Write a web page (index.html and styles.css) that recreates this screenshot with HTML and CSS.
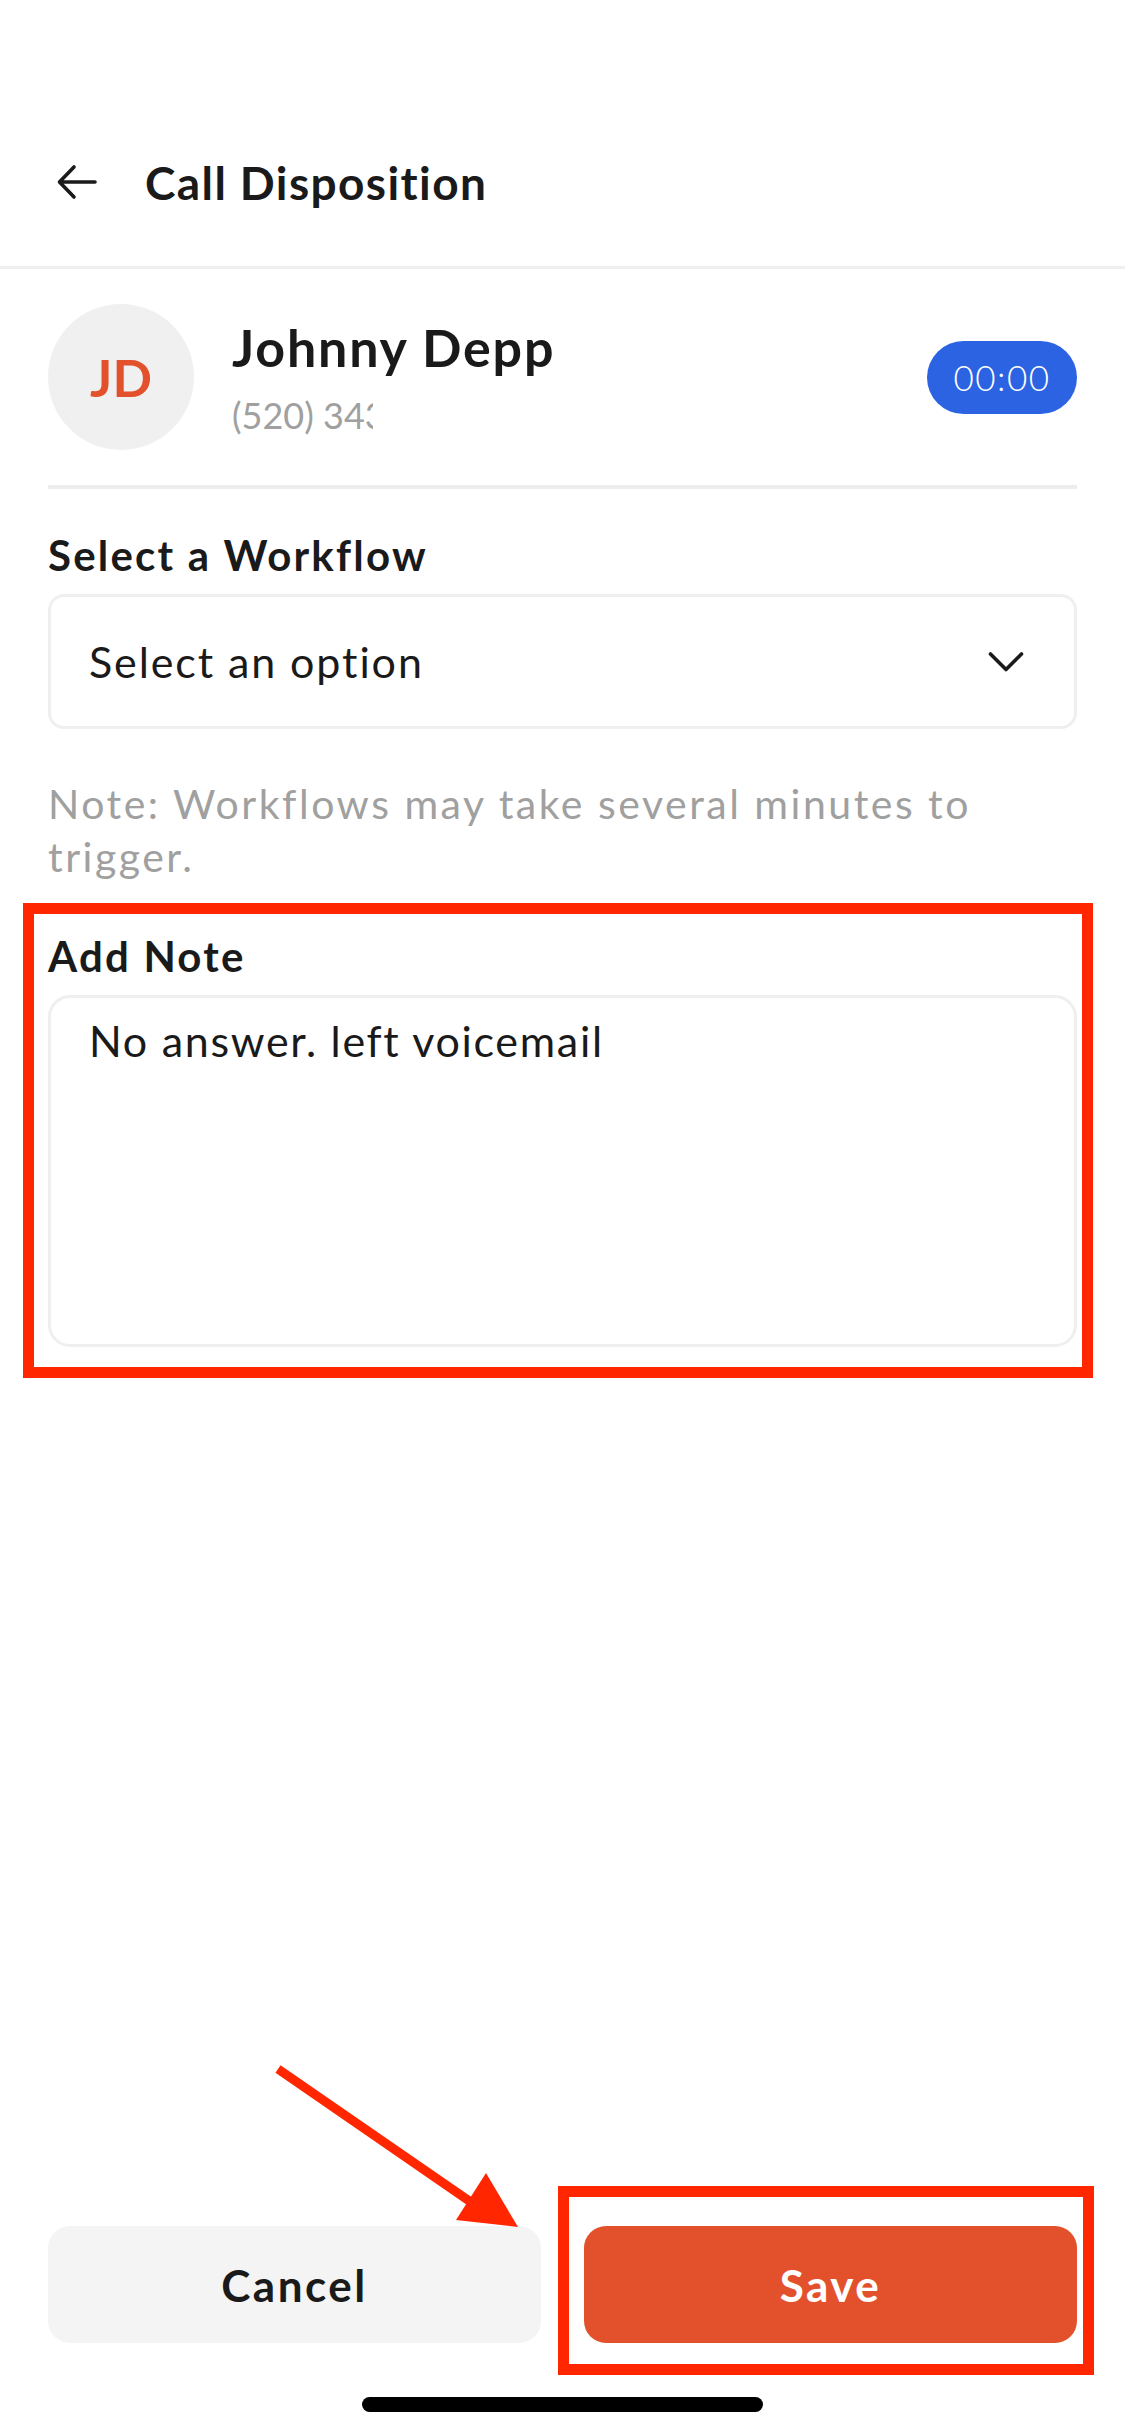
FILE: index.html
```html
<!DOCTYPE html>
<html lang="en">
<head>
<meta charset="utf-8">
<title>Call Disposition</title>
<link rel="stylesheet" href="styles.css">
</head>
<body>
<div class="screen">
  <header class="topbar">
    <div class="header-row">
      <svg class="back" viewBox="0 0 42 36" width="42" height="36">
        <path d="M39 18H4M18 3L3.5 18L18 33" fill="none" stroke="#1a1a1a" stroke-width="3.6" stroke-linecap="round" stroke-linejoin="round"/>
      </svg>
      <h1 class="title">Call Disposition</h1>
    </div>
  </header>

  <main class="content">
    <section class="contact">
      <div class="avatar">JD</div>
      <div class="contact-info">
        <div class="name">Johnny Depp</div>
        <div class="phone">(520) 343-1122</div>
      </div>
      <div class="timer">00:00</div>
    </section>
    <div class="divider"></div>

    <section class="field">
      <div class="label">Select a Workflow</div>
      <div class="select">
        <span class="select-text">Select an option</span>
        <svg class="chevron" viewBox="0 0 36 22" width="36" height="22">
          <path d="M2.5 3L18 18.5L33.5 3" fill="none" stroke="#1a1a1a" stroke-width="3.6" stroke-linecap="round" stroke-linejoin="round"/>
        </svg>
      </div>
      <p class="hint">Note: Workflows may take several minutes to trigger.</p>
    </section>

    <section class="note-section">
      <div class="label">Add Note</div>
      <div class="textarea">No answer. left voicemail</div>
    </section>
  </main>

  <footer class="footer">
    <div class="buttons">
      <button class="btn btn-cancel">Cancel</button>
      <button class="btn btn-save">Save</button>
    </div>
    <div class="home-indicator"></div>
  </footer>

  <svg class="annot-arrow" viewBox="0 0 1125 2436" width="1125" height="2436">
    <line x1="278" y1="2069" x2="478" y2="2207" stroke="#ff2600" stroke-width="9"/>
    <polygon points="486,2173 456,2220 518,2227" fill="#ff2600"/>
  </svg>
</div>
</body>
</html>
```

FILE: styles.css
```css
* { box-sizing: border-box; }

html, body {
  margin: 0;
  padding: 0;
  background: #ffffff;
}

body {
  font-family: "Lato", "Noto Sans", sans-serif;
  color: #1a1a1a;
}

.screen {
  position: relative;
  width: 1125px;
  height: 2436px;
  display: flex;
  flex-direction: column;
  overflow: hidden;
}

/* Header */
.topbar {
  padding-top: 138px;
  padding-bottom: 40px;
  border-bottom: 3px solid #efefef;
}

.header-row {
  height: 88px;
  display: flex;
  align-items: center;
  padding-left: 56px;
  gap: 47px;
}

.back { display: block; }

.title {
  margin: 0;
  font-size: 46px;
  font-weight: 700;
  letter-spacing: 1.4px;
}

/* Content */
.content {
  padding: 0 48px;
}

.contact {
  display: flex;
  align-items: center;
  margin-top: 35px;
}

.avatar {
  width: 146px;
  height: 146px;
  border-radius: 50%;
  background: #f0f0f0;
  color: #e3512c;
  font-size: 52px;
  font-weight: 700;
  display: flex;
  align-items: center;
  justify-content: center;
  flex-shrink: 0;
}

.contact-info {
  margin-left: 38px;
  flex: 1;
  align-self: flex-start;
  padding-top: 12px;
}

.name {
  font-size: 52px;
  font-weight: 700;
  line-height: 62px;
  letter-spacing: 1.8px;
}

.phone {
  width: 141px;
  overflow: hidden;
  white-space: nowrap;
  font-size: 36px;
  line-height: 50px;
  color: #a0a0a0;
  margin-top: 12px;
}

.timer {
  width: 150px;
  height: 73px;
  border-radius: 37px;
  background: #2b63e3;
  color: #ffffff;
  font-size: 35px;
  font-weight: 300;
  display: flex;
  align-items: center;
  justify-content: center;
  letter-spacing: 1.5px;
}

.divider {
  height: 4px;
  background: #ededed;
  margin-top: 35px;
}

.field {
  margin-top: 38px;
}

.label {
  font-size: 42px;
  font-weight: 700;
  line-height: 56px;
  letter-spacing: 2.2px;
}

.select {
  margin-top: 11px;
  height: 135px;
  border: 3px solid #efefef;
  border-radius: 16px;
  display: flex;
  align-items: center;
  justify-content: space-between;
  padding: 0 50px 0 38px;
}

.select-text {
  font-size: 43px;
  letter-spacing: 1.9px;
}

.chevron { display: block; }

.hint {
  margin: 48px 0 0;
  font-size: 41px;
  line-height: 53px;
  color: #a0a0a0;
  letter-spacing: 2.5px;
  width: 990px;
}

/* Annotated note section */
.note-section {
  margin: 20px -16px 0 -25px;
  border: 11px solid #ff2600;
  padding: 14px 5px 20px 14px;
}

.textarea {
  margin-top: 11px;
  height: 352px;
  border: 3px solid #efefef;
  border-radius: 22px;
  padding: 15px 38px;
  font-size: 43px;
  line-height: 56px;
  letter-spacing: 1.7px;
}

/* Footer */
.footer {
  margin-top: auto;
  padding: 0 48px 24px;
}

.buttons {
  display: flex;
  gap: 43px;
}

.btn {
  flex: 1;
  height: 117px;
  border: none;
  border-radius: 22px;
  font-family: inherit;
  font-size: 44px;
  font-weight: 700;
  letter-spacing: 2.5px;
}

.btn-cancel {
  background: #f4f4f4;
  color: #1a1a1a;
}

.btn-save {
  position: relative;
  background: #e3512c;
  color: #ffffff;
}

.btn-save::after {
  content: "";
  position: absolute;
  top: -40px;
  left: -26px;
  right: -17px;
  bottom: -32px;
  border: 11px solid #ff2600;
}

.home-indicator {
  width: 401px;
  height: 15px;
  border-radius: 8px;
  background: #000;
  margin: 54px auto 0;
}

.annot-arrow {
  position: absolute;
  left: 0;
  top: 0;
  pointer-events: none;
}
```
